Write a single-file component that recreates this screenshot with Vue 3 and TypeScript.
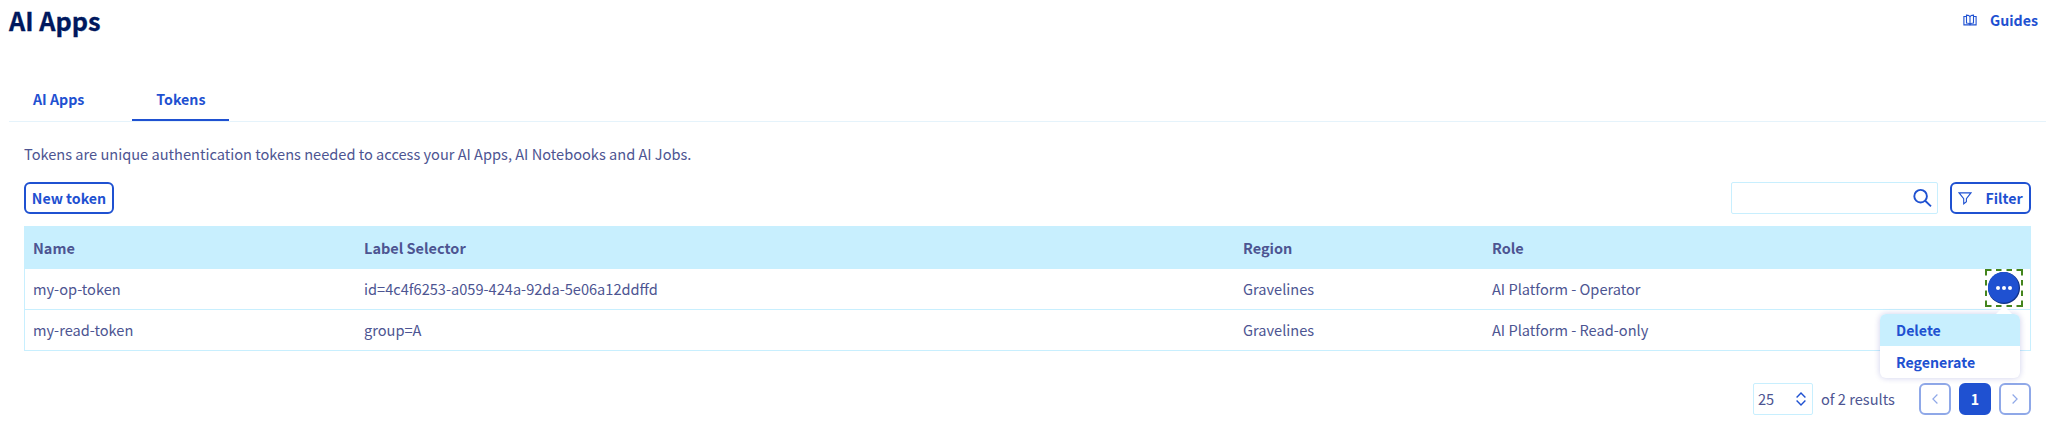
<script setup lang="ts">
import { ref } from 'vue'

interface Token {
  name: string
  selector: string
  region: string
  role: string
}

const tabs = ['AI Apps', 'Tokens']
const activeTab = ref('Tokens')
const openMenu = ref('my-op-token')
const search = ref('')

const tokens: Token[] = [
  {
    name: 'my-op-token',
    selector: 'id=4c4f6253-a059-424a-92da-5e06a12ddffd',
    region: 'Gravelines',
    role: 'AI Platform - Operator',
  },
  { name: 'my-read-token', selector: 'group=A', region: 'Gravelines', role: 'AI Platform - Read-only' },
]
</script>

<template>
  <main class="page">
    <header class="top">
      <h1>AI Apps</h1>
      <a class="guides">
        <svg width="14" height="12" viewBox="0 0 14 12" fill="none" stroke="currentColor" stroke-width="1.1">
          <path d="M3.5 2.5H.9V10.9H13.1V2.5H10.5" />
          <path d="M3.5 9V1.1C5.4 1.1 6.6 1.8 7 2.9C7.4 1.8 8.6 1.1 10.5 1.1V9C8.8 9 7.5 9.4 7 10.4C6.5 9.4 5.2 9 3.5 9ZM7 2.9V10" />
        </svg>
        <span>Guides</span>
      </a>
    </header>

    <nav class="tabs">
      <button
        v-for="tab in tabs"
        :key="tab"
        class="tab"
        :class="{ active: tab === activeTab }"
        @click="activeTab = tab"
      >
        {{ tab }}
      </button>
    </nav>

    <section class="content">
      <p class="intro">Tokens are unique authentication tokens needed to access your AI Apps, AI Notebooks and AI Jobs.</p>

      <div class="toolbar">
        <button class="btn new">New token</button>
        <label class="search">
          <input v-model="search" type="text" />
          <svg width="20" height="20" viewBox="0 0 20 20" fill="none" stroke="currentColor" stroke-width="1.9">
            <circle cx="8.6" cy="8.2" r="6.3" />
            <path d="M13.2 12.8L19 18.4" />
          </svg>
        </label>
        <button class="btn filter">
          <svg width="14" height="13" viewBox="0 0 14 13" fill="none" stroke="currentColor" stroke-width="1.1">
            <path d="M1.1.9H12.9L8.4 6.6V9.8L5.7 11.8V6.6Z" />
          </svg>
          <span>Filter</span>
        </button>
      </div>

      <div class="table">
        <div class="row head">
          <span>Name</span>
          <span>Label Selector</span>
          <span>Region</span>
          <span>Role</span>
        </div>
        <div v-for="token in tokens" :key="token.name" class="row">
          <span>{{ token.name }}</span>
          <span>{{ token.selector }}</span>
          <span>{{ token.region }}</span>
          <span>{{ token.role }}</span>
          <div v-if="openMenu === token.name" class="actions">
            <button class="more" aria-label="Actions">
              <svg width="38" height="38" viewBox="0 0 38 38">
                <path
                  class="focus"
                  d="M1 6.5V1H6.5M11 1H16.5M21.5 1H27M31.5 1H37V6.5M37 11V16.5M37 21.5V27M37 31.5V37H31.5M27 37H21.5M16.5 37H11M6.5 37H1V31.5M1 27V21.5M1 16.5V11"
                />
                <circle cx="19" cy="19" r="16" fill="#113286" />
                <circle cx="18.4" cy="18.4" r="15.4" fill="#1f51d1" />
                <g fill="#fff">
                  <circle cx="13" cy="19" r="2" />
                  <circle cx="19" cy="19" r="2" />
                  <circle cx="25" cy="19" r="2" />
                </g>
              </svg>
            </button>
            <div class="menu">
              <button class="item hovered">Delete</button>
              <button class="item">Regenerate</button>
            </div>
          </div>
        </div>
      </div>

      <footer class="pager">
        <div class="size">
          <span>25</span>
          <svg width="10" height="14" viewBox="0 0 10 14" fill="none" stroke="currentColor" stroke-width="1.4">
            <path d="M.6 5.4L5 1L9.4 5.4M.6 8.6L5 13L9.4 8.6" />
          </svg>
        </div>
        <span class="total">of 2 results</span>
        <button class="page-btn">
          <svg width="6" height="10" viewBox="0 0 6 10" fill="none" stroke="currentColor" stroke-width="1.2">
            <path d="M5.4.5L.9 5L5.4 9.5" />
          </svg>
        </button>
        <button class="page-btn current">1</button>
        <button class="page-btn">
          <svg width="6" height="10" viewBox="0 0 6 10" fill="none" stroke="currentColor" stroke-width="1.2">
            <path d="M.6.5L5.1 5L.6 9.5" />
          </svg>
        </button>
      </footer>
    </section>
  </main>
</template>

<style>
body {
  background: #fff;
}
</style>

<style scoped>
.page {
  box-sizing: border-box;
  height: 434px;
  overflow: hidden;
  padding: 0 14px 0 9px;
  font-family: 'Noto Sans CJK SC', 'Noto Sans', sans-serif;
  font-size: 14.6px;
  line-height: 20px;
  color: #4d5592;
}
.page * {
  box-sizing: border-box;
}
button {
  margin: 0;
  padding: 0;
  border: 0;
  background: none;
  font: inherit;
  font-size: 14.2px;
  font-weight: 700;
  color: #1f51d1;
}
svg {
  display: block;
  flex: none;
}
.top {
  display: flex;
  justify-content: space-between;
  height: 80px;
}
h1 {
  margin: 4px 0 0;
  font-size: 25.3px;
  line-height: 32px;
  font-weight: 700;
  color: #00185e;
  -webkit-text-stroke: 0.3px #00185e;
}
.guides {
  display: flex;
  align-items: center;
  gap: 13px;
  height: 20px;
  margin: 10px 8px 0 0;
  font-size: 14.2px;
  font-weight: 700;
  color: #1f51d1;
}
.tabs {
  display: flex;
  gap: 24px;
  height: 42px;
  border-bottom: 1px solid #e5f3fb;
}
.tab {
  padding: 0 24px 3px;
  height: 41px;
}
.tab.active {
  border-bottom: 2px solid #1f51d1;
  padding-bottom: 1px;
}
.content {
  padding: 22px 15px 0;
}
.intro {
  margin: 0 0 18px;
}
.toolbar {
  display: flex;
  height: 32px;
  margin-bottom: 12px;
}
.btn {
  display: flex;
  align-items: center;
  justify-content: center;
  height: 32px;
  border: 2px solid #1f51d1;
  border-radius: 6px;
}
.btn.new {
  width: 90px;
}
.search {
  display: flex;
  align-items: center;
  width: 207px;
  margin: 0 12px 0 auto;
  padding: 0 5px 0 8px;
  border: 1px solid #c8effe;
  border-radius: 2px;
  color: #1f51d1;
}
.search input {
  flex: 1;
  min-width: 0;
  border: 0;
  outline: 0;
  padding: 0;
  font: inherit;
}
.btn.filter {
  width: 81px;
  gap: 13px;
}
.table {
  border: 1px solid #c8effe;
  border-top: 0;
}
.row {
  position: relative;
  display: grid;
  grid-template-columns: 331px 879px 249px 1fr;
  align-items: center;
  height: 41px;
  padding-left: 8px;
  border-top: 1px solid #c8effe;
}
.row.head {
  height: 43px;
  background: #c8effe;
  font-size: 14.5px;
  font-weight: 700;
}
.row.head + .row {
  height: 40px;
  border-top: 0;
}
.actions {
  position: absolute;
  z-index: 1;
  top: 0;
  right: 7px;
  width: 38px;
}
.more {
  display: block;
}
.focus {
  fill: none;
  stroke: #44851d;
  stroke-width: 2;
}
.menu {
  position: absolute;
  top: 45px;
  right: 3px;
  width: 140px;
  border-radius: 6px;
  background: #fff;
  box-shadow: 0 0 6px rgba(0, 14, 156, 0.2);
}
.menu::before {
  content: '';
  position: absolute;
  top: -8px;
  right: 7px;
  width: 18px;
  height: 9px;
  background: #fff;
  clip-path: polygon(50% 0, 100% 100%, 0 100%);
}
.item {
  position: relative;
  display: block;
  width: 100%;
  height: 32px;
  padding-left: 16px;
  text-align: left;
}
.item.hovered {
  border-radius: 6px 6px 0 0;
  background: #c8effe;
}
.pager {
  display: flex;
  align-items: center;
  justify-content: flex-end;
  gap: 8px;
  margin-top: 32px;
}
.size {
  display: flex;
  align-items: center;
  justify-content: space-between;
  width: 60px;
  height: 32px;
  padding: 0 6px 0 4px;
  border: 1px solid #c8effe;
  border-radius: 2px;
}
.size svg {
  color: #1f51d1;
}
.total {
  width: 90px;
}
.page-btn {
  display: flex;
  align-items: center;
  justify-content: center;
  width: 32px;
  height: 32px;
  border: 2px solid #8fa8e8;
  border-radius: 6px;
  color: #8fa8e8;
}
.page-btn.current {
  border-color: #1f51d1;
  background: #1f51d1;
  color: #fff;
}
</style>
